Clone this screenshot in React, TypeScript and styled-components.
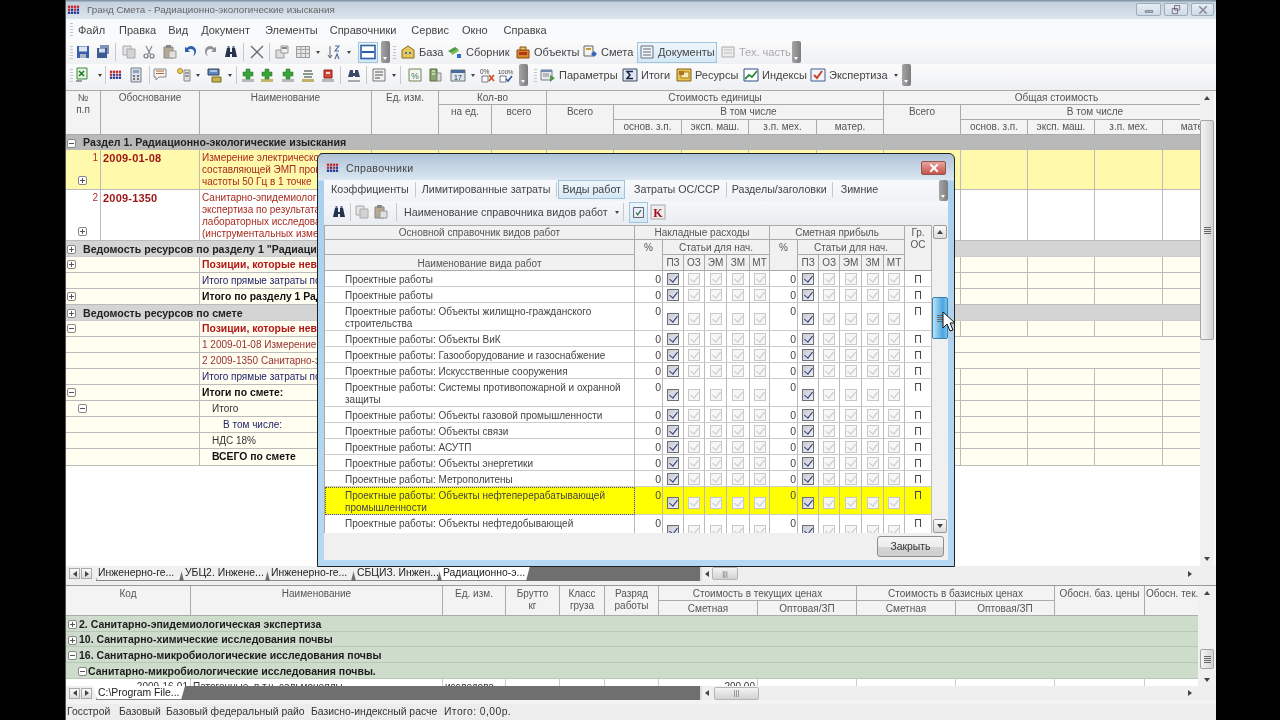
import React from "react";
import styled, { createGlobalStyle } from "styled-components";

const Global = createGlobalStyle`
  html, body { margin: 0; padding: 0; background: #000; }
  body { width: 1280px; height: 720px; overflow: hidden; font: 11px/12px "Liberation Sans", Arial, sans-serif; color: #333; }
  * { box-sizing: border-box; }
`;

const Page = styled.div`
  position: relative; width: 1280px; height: 720px; background: #000; padding-left: 65px; filter: blur(.35px);
`;
const Win = styled.div`
  width: 1151px; height: 720px; background: #f6f7f9; border-left: 1px solid #555; display: flex; flex-direction: column; overflow: hidden;
`;
const Title = styled.div`
  height: 19px; flex: none; display: flex; align-items: center; padding-left: 1px; color: #666; font-size: 9.8px;
  background: linear-gradient(#8497a8 0, #8497a8 1px, #c3d0dc 2px, #dbe5ee 100%);
`;
const TitleText = styled.span` flex: 1; margin-left: 6px; white-space: nowrap; `;
const Ctrl = styled.span`
  width: ${p => p.$w}px; height: 13px; margin-right: ${p => p.$mr ?? 3}px; border: 1px solid #9dadbb; border-radius: 2px; color: #556; display: flex; align-items: center; justify-content: center;
  background: linear-gradient(#e6edf3, #cfdae4);
`;
const Menu = styled.div`
  height: 21px; flex: none; display: flex; align-items: center; padding-left: 4px; background: #f9fafb; color: #444;
`;
const Grip = styled.span`
  width: 3px; height: 13px; flex: none; margin-left: ${p => p.$ml || 0}px; background: repeating-linear-gradient(#c0c4cc 0 1px, transparent 1px 3px);
`;
const MenuItem = styled.span` margin-left: ${p => p.$ml}px; white-space: nowrap; `;
const Bar = styled.div`
  height: ${p => p.$h}px; flex: none; display: flex; align-items: center; padding: 0 0 ${p => p.$pb || 0}px 4px; background: linear-gradient(#fbfbfc, #eef0f3); color: #555;
`;
const TB = styled.span`
  width: ${p => p.$w}px; height: 21px; flex: none; display: flex; align-items: center; justify-content: ${p => p.$text ? "flex-start" : "center"}; gap: ${p => p.$text ? 3 : 2}px; color: ${p => p.$dim ? "#aaa" : "#444"}; white-space: nowrap;
  margin-left: ${p => p.$ml || 0}px; padding-left: ${p => p.$text ? (p.$on ? 1 : 3) : 0}px; font-size: ${p => p.$fs || 11}px;
  ${p => p.$on ? "border: 1px solid #9fc4de; background: linear-gradient(#eef6fc,#d5e8f6);" : ""}
`;
const Caret = styled.span`
  width: 0; height: 0; flex: none; margin-left: ${p => p.$ml ?? 3}px; border: 2.5px solid transparent; border-top: 3px solid #444; border-bottom: 0;
`;
const Sep = styled.span` width: 1px; height: 18px; flex: none; margin: 0 ${p => p.$m ?? 2}px; background: #c7c9cc; `;
const More = styled.span`
  width: 9px; height: 22px; flex: none; margin-left: ${p => p.$ml || 0}px; border-radius: 2px; background: linear-gradient(90deg,#a5a5a5,#7d7d7d); position: relative;
  &::after { content: ""; position: absolute; left: 2px; bottom: 3px; border: 2.5px solid transparent; border-top: 3px solid #fff; border-bottom: 0; }
`;

const Main = styled.div` height: 476px; flex: none; display: flex; border-top: 1px solid #aaa; `;
const GridWrap = styled.div` width: 1134px; flex: none; overflow: hidden; background: #fff; `;
const Table = styled.table`
  border-collapse: separate; border-spacing: 0; table-layout: fixed; width: ${p => p.$w}px;
`;
const Head = styled.th`
  font-weight: 400; font-size: 10px; line-height: 12px; color: #555; background: #f3f3f3; vertical-align: top; text-align: center; padding: 1px 1px 0;
  border-right: 1px solid #aaa; border-bottom: 1px solid #aaa; overflow: hidden; white-space: ${p => p.$wrap ? "normal" : "nowrap"};
`;
const LHead = styled(Head)` padding-top: 2px; `;
const Tr = styled.tr` height: ${p => p.$h}px; `;
const Section = styled.td`
  background: ${p => p.$dark ? "#b9b9b9" : "#d4d4d4"}; font-weight: 700; font-size: 10.6px; color: #222; padding: 0 0 0 1px; white-space: nowrap; overflow: hidden; border-bottom: 1px solid ${p => p.$dark ? "#b9b9b9" : "#ccc"};
`;
const Cell = styled.td`
  background: ${p => p.$bg}; border-right: 1px solid #bbb; border-bottom: 1px solid #bbb; padding: 0 2px; overflow: hidden; vertical-align: middle; color: #333; font-size: 10px;
`;
const Num = styled(Cell)` position: relative; text-align: right; vertical-align: top; color: #b03030; padding-top: 2px; `;
const Code = styled(Cell)` font-weight: 700; font-size: 11px; color: #9d1414; vertical-align: top; letter-spacing: .2px; white-space: nowrap; padding-top: 2px; `;
const Name = styled(Cell)`
  color: ${p => p.$c || "#333"}; font-weight: ${p => p.$b ? 700 : 400}; font-size: ${p => p.$b ? 10.4 : 10}px; padding-left: ${p => p.$i || 2}px; vertical-align: ${p => p.$top ? "top" : "middle"}; padding-top: ${p => p.$top ? 2 : 0}px; white-space: nowrap;
`;
const Exp = styled.span`
  display: inline-block; vertical-align: middle; position: relative; width: 9px; height: 9px; border: 1px solid #888; border-radius: 2px; background: #fff; margin-right: ${p => p.$mr || 0}px; margin-left: ${p => p.$ml || 0}px; flex: none;
  &::before { content: ""; position: absolute; left: 1px; right: 1px; top: 3px; height: 1px; background: #555; }
  &::after { content: ""; display: ${p => p.$open ? "none" : "block"}; position: absolute; top: 1px; bottom: 1px; left: 3px; width: 1px; background: #555; }
`;
const ExpCell = styled(Cell)` vertical-align: middle; padding: 0 0 0 1px; `;
const RowExp = styled(Exp)` position: absolute; left: 12px; bottom: 4px; `;

const VScroll = styled.div`
  width: ${p => p.$w || 14}px; flex: none; display: flex; flex-direction: column; background: #f0f0f0; position: relative; align-items: center; padding: 0 ${p => p.$px || 0}px;
`;
const Arrow = styled.span`
  width: 0; height: 0; margin: ${p => p.$m || "5px 0"}; border: 3px solid transparent; flex: none;
  ${p => p.$dir === "up" ? "border-bottom: 4px solid #444; border-top: 0;" : ""}
  ${p => p.$dir === "down" ? "border-top: 4px solid #444; border-bottom: 0;" : ""}
  ${p => p.$dir === "left" ? "border-right: 4px solid #444; border-left: 0;" : ""}
  ${p => p.$dir === "right" ? "border-left: 4px solid #444; border-right: 0;" : ""}
`;
const Thumb = styled.span`
  width: 100%; height: ${p => p.$h}px; flex: none; margin-top: ${p => p.$mt}px; border: 1px solid #a5a5a5; border-radius: 2px; display: flex; align-items: center; justify-content: center;
  background: linear-gradient(90deg,#f4f4f4,#d4d4d4);
`;
const Lines = styled.span`
  width: 7px; height: 7px; background: repeating-linear-gradient(#666 0 1px, transparent 1px 2px); 
`;
const Spacer = styled.span` flex: 1; `;
const TabStrip = styled.div` height: ${p => p.$h}px; flex: none; display: flex; align-items: stretch; background: #6f6f6f; `;
const TabNav = styled.span` width: 30px; flex: none; background: #eee; display: flex; align-items: center; padding-left: 3px; gap: 1px; `;
const NavBtn = styled.span` width: 11px; height: 11px; border: 1px solid #aaa; background: linear-gradient(#fafafa,#ddd); display: flex; align-items: center; justify-content: center; `;
const Tab = styled.span`
  width: ${p => p.$w}px; flex: none; margin-left: -3px; padding-left: 5px; line-height: 13px; color: #222; white-space: nowrap; overflow: hidden; font-size: 10.4px;
  background: ${p => p.$on ? "#fff" : "#f0f0f0"}; border-bottom: 1px solid #888;
  clip-path: polygon(0 0, 100% 0, calc(100% - 4px) 100%, 4px 100%);
`;
const DarkFill = styled.span` flex: 1; background: #6f6f6f; `;
const HScroll = styled.span`
  width: ${p => p.$w}px; flex: none; background: #efefef; display: flex; align-items: center; padding-left: 3px; border-left: 2px solid #ddd;
`;
const HThumb = styled.span`
  width: ${p => p.$w}px; height: 13px; margin-left: ${p => p.$ml}px; border: 1px solid #b5b5b5; border-radius: 2px; background: linear-gradient(#f4f4f4,#d2d2d2); display: flex; align-items: center; justify-content: center; font-size: 7px; color: #666; letter-spacing: 0;
`;
const Splitter = styled.div` height: 5px; flex: none; background: #efefef; border-bottom: 1px solid #999; `;
const Lower = styled.div` height: 100px; flex: none; display: flex; `;
const LowerWrap = styled.div` width: 1132px; flex: none; overflow: hidden; background: #fff; `;
const GreenRow = styled.td`
  background: #cddccb; border-bottom: 1px solid #b8c8b6; font-weight: 700; font-size: 10.5px; color: #1c1c1c; white-space: nowrap; padding-left: ${p => p.$i || 2}px;
`;
const PlainCell = styled.td`
  border-right: 1px solid #ccc; overflow: hidden; white-space: nowrap; vertical-align: top; font-size: 10px; text-align: ${p => p.$r ? "right" : "left"}; color: #333; padding: 2px 2px 0; height: 16px;
`;
const Gap = styled.div` height: 4px; flex: none; background: #f3f3f3; `;
const Status = styled.div` height: 16px; flex: none; display: flex; align-items: center; background: #ededed; color: #333; font-size: 10.4px; letter-spacing: .05px; white-space: nowrap; overflow: hidden; `;
const StatusItem = styled.span` width: ${p => p.$w}px; flex: none; overflow: hidden; padding-left: 1px; letter-spacing: ${p => p.$ls || 0}px; `;

/* dialog */
const Dialog = styled.div`
  position: absolute; left: 317px; top: 153px; width: 638px; height: 414px; border: 1px solid #222; border-radius: 6px 6px 0 0; overflow: hidden;
  padding: 0 6px 6px; display: flex; flex-direction: column;
  background: linear-gradient(#afc3d6 0, #dbe7f2 26px, #a9d0ee 27px, #b5d9f3 100%);
`;
const DTitle = styled.div` height: 26px; flex: none; display: flex; align-items: center; color: #444; font-size: 10.6px; letter-spacing: .3px; padding: 2px 0 0 2px; `;
const DClose = styled.span`
  width: 25px; height: 14px; margin-right: 2px; border-radius: 2px; border: 1px solid #93524e; background: linear-gradient(#e8a49c,#c4544a); display: flex; align-items: center; justify-content: center; color: #fff;
`;
const DTabs = styled.div` height: 21px; flex: none; display: flex; align-items: flex-start; background: linear-gradient(#f8f9fb,#eff2f6); padding-left: 2px; color: #444; font-size: 10.7px; position: relative; `;
const DTab = styled.span`
  padding: 0 ${p => p.$pr ?? p.$pad ?? 5}px 0 ${p => p.$pad ?? 5}px; height: 19px; line-height: 17px; white-space: nowrap; margin-left: ${p => p.$ml || 0}px; border: 1px solid ${p => p.$on ? "#9fc4de" : "transparent"}; ${p => p.$on ? "background: linear-gradient(#eef6fc,#d5e8f6);" : ""}
`;
const DSep = styled.span` width: 1px; height: 15px; margin-top: 2px; background: #c5c8cc; flex: none; `;
const DMore = styled(More)` position: absolute; right: 0; top: 0; height: 21px; `;
const DBar = styled.div` height: 24px; flex: none; display: flex; align-items: center; padding: 0 0 2px 7px; background: linear-gradient(#f6f7fa,#e9ecf1); color: #444; `;
const DBody = styled.div` height: 308px; flex: none; display: flex; background: #f0f0f0; `;
const DGrid = styled.div` width: 608px; flex: none; overflow: hidden; background: #fff; border-top: 1px solid #aaa; border-left: 1px solid #aaa; `;
const DHead = styled(Head)` background: #f1f1f1; padding-top: ${p => p.$pt ?? 2}px; `;
const DCell = styled.td`
  background: ${p => p.$y ? "#ffff00" : "#fff"}; border-right: 1px solid #bbb; border-bottom: 1px solid #ccc; text-align: center; vertical-align: middle; padding: ${p => p.$tall ? "4px 0 0" : 0};
`;
const DName = styled.td`
  background: ${p => p.$y ? "#ffff00" : "#fff"}; border-right: 1px solid #bbb; border-bottom: 1px solid #ccc; padding: 3px 10px 0 20px; vertical-align: top; color: #444; font-size: 10px; line-height: 12px;
  ${p => p.$y ? "outline: 1px dotted #555; outline-offset: -1px;" : ""}
`;
const DVal = styled.td`
  background: ${p => p.$y ? "#ffff00" : "#fff"}; border-right: 1px solid #bbb; border-bottom: 1px solid #ccc; text-align: ${p => p.$c ? "center" : "right"}; vertical-align: top; padding: 2px 1px 0; color: #444; font-size: 10.5px;
`;
const Check = styled.span`
  display: inline-block; vertical-align: middle; width: 12px; height: 12px; border: 1px solid ${p => p.$on ? "#6f7074" : "#c6c8cc"}; background: ${p => p.$on ? "linear-gradient(135deg,#c8cad2,#eceef2)" : "#f6f6f6"}; position: relative;
  &::after { content: ""; position: absolute; left: 3px; top: 0; width: 4px; height: 7px; border: solid ${p => p.$on ? "#2c3c7c" : "#c4c8cc"}; border-width: 0 1.5px 1.5px 0; transform: rotate(38deg); }
`;
const DFoot = styled.div` flex: 1; display: flex; justify-content: flex-end; align-items: center; padding-right: 4px; background: #f0f0f0; `;
const DBtn = styled.span` width: 67px; height: 21px; border: 1px solid #8d8d8d; border-radius: 3px; background: linear-gradient(#f5f5f5 0, #ececec 50%, #d4d4d4 52%, #cfcfcf 100%); display: flex; align-items: center; justify-content: center; color: #333; font-size: 10.4px; `;
const DThumb = styled(Thumb)` border-color: #3c7fb1; background: linear-gradient(90deg,#b9e1f7,#4aa5de 70%,#7cc3eb); `;
const DScrollBtn = styled.span` width: 14px; height: 14px; flex: none; border: 1px solid #999; border-radius: 2px; background: linear-gradient(#fafafa,#dcdcdc); display: flex; align-items: center; justify-content: center; `;
const Pointer = styled.svg` position: absolute; left: 942px; top: 311px; `;

/* icons */
const S: React.FC<{ children: React.ReactNode; s?: number }> = ({ children, s = 16 }) => (
  <svg width={s} height={s} viewBox="0 0 16 16" style={{ flex: "none" }}>{children}</svg>
);
const Logo = () => (
  <S s={14}>
    {[0, 1, 2, 3].map(c => [0, 1, 2].map(r => (
      <rect key={c + "-" + r} x={1 + c * 3.4} y={3 + r * 3.4} width="2.6" height="2.6" fill={r === 0 ? "#c6262b" : r === 1 ? (c % 2 ? "#273a9c" : "#c6262b") : "#1f2f92"} />
    )))}
  </S>
);
const icons: Record<string, React.ReactNode> = {
  save: <><path d="M2 2h12v12H2z" fill="#3a5fa8" /><path d="M4 2.5h8v5H4z" fill="#dfe6f2" /><path d="M5 10h6v4H5z" fill="#aab6cc" /></>,
  saveall: <><path d="M5 1h9v9H5z" fill="#7f93b8" /><path d="M2 4h10v10H2z" fill="#3e5a92" /><path d="M4 4.5h6v4H4z" fill="#d5deeb" /></>,
  copy: <><path d="M2 2h8v9H2z" fill="#e3e3e3" stroke="#aaa" /><path d="M6 5h8v9H6z" fill="#d3d3d3" stroke="#aaa" /></>,
  cut: <><path d="M5 2l4 8M11 2L7 10" stroke="#888" strokeWidth="1.2" /><circle cx="5" cy="12" r="2" fill="none" stroke="#777" strokeWidth="1.2" /><circle cx="11" cy="12" r="2" fill="none" stroke="#777" strokeWidth="1.2" /></>,
  paste: <><path d="M2 3h9v11H2z" fill="#b6a98f" stroke="#888" /><path d="M4 1h5v3H4z" fill="#888" /><path d="M7 7h7v7H7z" fill="#e0e0e0" stroke="#999" /></>,
  undo: <path d="M3 3v5h5L6 6c2-2 5-1 6 1 .6 2 0 4-1 5 3-1 4-5 2-8-2-2-5-3-8 0z" fill="#2f5fae" />,
  redo: <path d="M13 3v5H8l2-2c-2-2-5-1-6 1-.6 2 0 4 1 5-3-1-4-5-2-8 2-2 5-3 8 0z" fill="#8f9399" />,
  bino: <><path d="M2 13l2-9h3v4h2V4h3l2 9H9v-3H7v3z" fill="#24324f" /><path d="M4.5 2h2v2h-2zM9.5 2h2v2h-2z" fill="#5a6b8a" /></>,
  cross: <path d="M2 2l12 12M14 2L2 14" stroke="#6a6a6a" strokeWidth="1.3" />,
  props: <><path d="M2 6h8v8H2z" fill="#ddd" stroke="#999" /><path d="M7 2h7v7H7z" fill="#f0f0f0" stroke="#999" /><path d="M8 3h5v2H8z" fill="#888" /></>,
  table: <><path d="M1.5 2.5h13v11h-13z" fill="#e6e6e6" stroke="#999" /><path d="M1.5 5.5h13M1.5 9.5h13M6 2.5v11M10.5 2.5v11" stroke="#a5a5a5" /></>,
  sort: <><path d="M4 2v12M2 11l2 3 2-3" stroke="#666" fill="none" /><path d="M9 2h4L9 7h4M9 15l2-5 2 5" stroke="#4a6a9a" fill="none" strokeWidth="1.1" /></>,
  layout: <><rect x="1" y="1.5" width="14" height="13" fill="#fff" stroke="#2e5fa6" strokeWidth="1.6" /><path d="M2 7h12v2H2z" fill="#2e5fa6" /></>,
  base: <><path d="M2 6l6-4 6 4v8H2z" fill="#e8c75b" stroke="#8a6a22" /><path d="M5 8h2v2H5zM9 8h2v2H9z" fill="#3a72b8" /></>,
  sborn: <><path d="M1 7l7-4 3 2-7 4z" fill="#4c9c42" /><path d="M4 9l7-4 1 2-7 4z" fill="#7ab953" /><path d="M10 10h4v4h-4z" fill="#2d6bc4" /></>,
  obj: <><path d="M2 6h12v8H2z" fill="#d8862c" stroke="#8a4a12" /><path d="M5 3h6v3H5z" fill="#f2c46a" stroke="#8a4a12" /><path d="M4 8h8v3H4z" fill="#b5341f" /></>,
  smeta: <><path d="M2 2h9v10H2z" fill="#f2f2f2" stroke="#666" /><path d="M4 4h5v2H4z" fill="#c99a2e" /><path d="M9 10l3-3 3 3-3 3z" fill="#2f68bb" /></>,
  docs: <><path d="M2 2h12v12H2z" fill="#f5f5f5" stroke="#607087" /><path d="M4 5h8M4 8h8M4 11h8" stroke="#5a6a80" /></>,
  tech: <><path d="M2 3h12v10H2z" fill="#eee" stroke="#aaa" /><path d="M4 6h8M4 9h8" stroke="#bbb" /></>,
  excel: <><path d="M3 1h10v11H3z" fill="#e6f1e2" stroke="#3f8a3c" /><path d="M5 4l5 5M10 4L5 9" stroke="#207a28" strokeWidth="1.6" /><path d="M2 14h6" stroke="#444" /></>,
  calc: <><path d="M3 1h10v14H3z" fill="#d8dce4" stroke="#78808c" /><path d="M5 3h6v3H5z" fill="#8ea2c2" /><path d="M5 8h2v2H5zM9 8h2v2H9zM5 11h2v2H5zM9 11h2v2H9z" fill="#777" /></>,
  note: <><path d="M1 2h12v8H6l-3 3v-3H1z" fill="#f4f4f4" stroke="#888" /><path d="M3 4h8M3 6.5h8" stroke="#b2602c" /></>,
  keyy: <><circle cx="5" cy="4" r="2.5" fill="#f0cc50" stroke="#a5872a" /><path d="M9 3h6v11H9z" fill="#dfdfdf" stroke="#888" /><path d="M10 6h4M10 9h4" stroke="#555" /></>,
  multi: <><path d="M1 2h11v6H1z" fill="#5d86c2" stroke="#345" /><path d="M3 4h7" stroke="#fff" /><path d="M5 10h9v5H5z" fill="#c9b34f" stroke="#75661f" /></>,
  plus: <><path d="M2 12h12v3H2z" fill="#b8b8b8" /><path d="M6 2h4v3h3v4h-3v3H6V9H3V5h3z" fill="#39a33a" stroke="#1b6f1f" strokeWidth=".5" /></>,
  plus2: <><path d="M2 12h12v3H2z" fill="#c8b46a" /><path d="M6 2h4v3h3v4h-3v3H6V9H3V5h3z" fill="#39a33a" stroke="#1b6f1f" strokeWidth=".5" /></>,
  lines: <><path d="M2 12h12v3H2z" fill="#c0b06a" /><path d="M4 4h8M3 7h10M4 10h8" stroke="#6a7a6a" strokeWidth="1.3" /></>,
  red: <><path d="M2 12h12v3H2z" fill="#b8b8b8" /><path d="M4 3h8v8H4z" fill="#d4473d" stroke="#8a201a" /><path d="M6 6h4" stroke="#fff" strokeWidth="1.5" /></>,
  find: <><path d="M2 13h12v2H2z" fill="#aaa" /><path d="M2 10l2-7h3v3h2V3h3l2 7H9V9H7v1z" fill="#3a4a66" /></>,
  list: <><path d="M2 2h12v12H2z" fill="#f0f0f0" stroke="#777" /><path d="M4 5h8M4 8h8M4 11h5" stroke="#555" /></>,
  pct: <><path d="M2 2h12v12H2z" fill="#f4f4f4" stroke="#6d8a55" /><text x="8" y="11.5" fontSize="8.5" fontFamily="Liberation Sans" textAnchor="middle" fill="#375">%</text></>,
  green: <><path d="M3 2h7v12H3z" fill="#8aa86a" stroke="#556b3a" /><path d="M5 4h3M5 7h3" stroke="#fff" /><path d="M10 6h4v8h-4z" fill="#ddd" stroke="#888" /></>,
  cal: <><path d="M1 3h14v11H1z" fill="#dfe5ee" stroke="#677" /><path d="M1 3h14v3H1z" fill="#4a6d9c" /><text x="8" y="13" fontSize="7" fontFamily="Liberation Sans" textAnchor="middle" fill="#234">17</text></>,
  pctx: <><text x="1" y="7" fontSize="6.5" fontFamily="Liberation Sans" fill="#444">0%</text><path d="M3 9h6v6H3z" fill="#fff" stroke="#778" /><path d="M10 8l5 6M15 8l-5 6" stroke="#d04a20" strokeWidth="1.6" /></>,
  pctok: <><text x="1" y="7" fontSize="6" fontFamily="Liberation Sans" fill="#444">100%</text><path d="M3 9h6v6H3z" fill="#fff" stroke="#778" /><path d="M9 12l2 2 4-5" stroke="#3158a8" strokeWidth="1.6" fill="none" /></>,
  params: <><path d="M1 3h11v10H1z" fill="#e8e8e8" stroke="#6f7f8f" /><path d="M1 3h11v2H1z" fill="#708bb0" /><path d="M3 7h6M3 9h6" stroke="#888" /><path d="M10 8l5 3-5 4z" fill="#4f9a4a" /></>,
  sigma: <><path d="M1 2h14v12H1z" fill="#dfe4ee" stroke="#3c4a66" /><path d="M11 4.5H5l3 3.5-3 3.5h6" stroke="#11224a" strokeWidth="1.5" fill="none" /></>,
  res: <><path d="M1 2h14v12H1z" fill="#e9c24e" stroke="#84661c" /><path d="M5 5h8v6H5z" fill="#f7ebb4" stroke="#a37a1c" /><path d="M3 4h5v4H3z" fill="#a8752a" /></>,
  idx: <><path d="M1 2h14v12H1z" fill="#fff" stroke="#2c4a8a" /><path d="M2 12l4-4 3 2 5-6" stroke="#2d8a38" strokeWidth="1.8" fill="none" /></>,
  exp: <><path d="M1 2h14v12H1z" fill="#f2f4f8" stroke="#3f5f95" /><path d="M4 8l3 3 5-7" stroke="#d23d28" strokeWidth="2" fill="none" /></>,
};
const Ic = ({ n }: { n: string }) => <S>{icons[n]}</S>;

type Item = { i?: string; w?: number; ml?: number; drop?: boolean; label?: string; sep?: boolean; m?: number; on?: boolean; dim?: boolean; cm?: number };
const tb1: Item[] = [
  { i: "save", w: 20 }, { i: "saveall", w: 20 }, { sep: true }, { i: "copy", w: 20, ml: 1 }, { i: "cut", w: 19 }, { i: "paste", w: 21, ml: 1 }, { i: "undo", w: 20 }, { i: "redo", w: 20, ml: 1 }, { i: "bino", w: 20 }, { sep: true },
  { i: "cross", w: 20, ml: 1 }, { sep: true }, { i: "props", w: 19 }, { i: "table", w: 29, drop: true, ml: 2 }, { i: "sort", w: 29, drop: true, ml: 2 },
  { i: "layout", w: 20, on: true, ml: 5 },
];
const tb1b: Item[] = [
  { i: "base", label: "База", w: 47 }, { i: "sborn", label: "Сборник", w: 68 }, { i: "obj", label: "Объекты", w: 67 }, { i: "smeta", label: "Смета", w: 58 },
  { i: "docs", label: "Документы", w: 80, on: true }, { i: "tech", label: "Тех. часть", w: 75, dim: true },
];
const tb2: Item[] = [
  { i: "excel", w: 30, drop: true, cm: 6 }, { sep: true }, { i: "logo", w: 16 }, { i: "calc", w: 22, ml: 1 }, { sep: true }, { i: "note", w: 18 }, { i: "keyy", w: 31, drop: true, ml: 2 }, { i: "multi", w: 30, drop: true, ml: 1 }, { sep: true },
  { i: "plus", w: 18 }, { i: "plus2", w: 20 }, { i: "plus", w: 21 }, { i: "lines", w: 20 }, { i: "red", w: 20 }, { sep: true }, { i: "find", w: 22 }, { sep: true, m: 1 }, { i: "list", w: 30, drop: true }, { sep: true }, { i: "pct", w: 20, ml: 2 }, { i: "green", w: 20 }, { i: "cal", w: 30, drop: true, ml: 2 }, { i: "pctx", w: 19 }, { i: "pctok", w: 18 },
];
const tb2b: Item[] = [
  { i: "params", label: "Параметры", w: 82 }, { i: "sigma", label: "Итоги", w: 54 }, { i: "res", label: "Ресурсы", w: 67 }, { i: "idx", label: "Индексы", w: 67 }, { i: "exp", label: "Экспертиза", w: 95, drop: true },
];
const renderItem = (it: Item, k: number) => {
  if (it.sep) return <Sep key={k} $m={it.m} />;
  return (
    <TB key={k} $w={it.w} $ml={it.ml} $on={it.on} $dim={it.dim} $text={!!it.label}>
      {it.i === "logo" ? <Logo /> : <Ic n={it.i!} />}
      {it.label && <span>{it.label}</span>}
      {it.drop && <Caret $ml={it.cm} />}
    </TB>
  );
};

const mainCols = [35, 99, 172, 67, 53, 55, 67, 68, 67, 68, 67, 77, 67, 67, 68, 67];
const MAINW = mainCols.reduce((a, b) => a + b, 0);
const Y = "#fff9ab", C = "#fffef0", W = "#fff";
const Empties = ({ bg, n = 13 }: { bg: string; n?: number }) => <>{Array.from({ length: n }, (_, i) => <Cell key={i} $bg={bg} />)}</>;

type R = { h: number; name: string; exp?: "+" | "-"; ind?: boolean; c?: string; b?: boolean; i?: number; wide?: boolean };
const creamA: R[] = [
  { h: 16, name: "Позиции, которые невозможно отнести", exp: "+", c: "#b31818", b: true },
  { h: 16, name: "Итого прямые затраты по разделу", c: "#22226e" },
  { h: 16, name: "Итого по разделу 1 Радиационно-экологические", exp: "+", c: "#111", b: true },
];
const creamB: R[] = [
  { h: 16, name: "Позиции, которые невозможно отнести", exp: "-", c: "#b31818", b: true },
  { h: 16, name: "1 2009-01-08 Измерение электрической составляющей ЭМП промышленной частоты 50 Гц в 1 точке, проектно-изыскательские работ", c: "#983030", wide: true },
  { h: 16, name: "2 2009-1350 Санитарно-эпидемиологическая экспертиза по результатам лабораторных исследований, проектно-изыскательских работ", c: "#983030", wide: true },
  { h: 16, name: "Итого прямые затраты по смете", c: "#22226e" },
  { h: 16, name: "Итоги по смете:", exp: "-", c: "#111", b: true },
  { h: 16, name: "Итого", exp: "-", ind: true, i: 12 },
  { h: 16, name: "В том числе:", c: "#22226e", i: 23 },
  { h: 16, name: "НДС 18%", i: 12 },
  { h: 17, name: "ВСЕГО по смете", c: "#111", b: true, i: 12 },
];
const CreamRow = ({ r }: { r: R }) => (
  <Tr $h={r.h}>
    <ExpCell colSpan={2} $bg={C}>{r.exp && <Exp $open={r.exp === "-"} $ml={r.ind ? 11 : 0} />}</ExpCell>
    {r.wide
      ? <Name colSpan={14} $bg={C} $c={r.c} $b={r.b} $i={r.i}>{r.name}</Name>
      : <><Name $bg={C} $c={r.c} $b={r.b} $i={r.i}>{r.name}</Name><Empties bg={C} /></>}
  </Tr>
);

const dCols = [310, 28, 21, 21, 22, 23, 20, 28, 21, 21, 22, 22, 21, 27];
const dRows: { n: string; h: number; tall?: boolean; y?: boolean }[] = [
  { n: "Проектные работы", h: 16 }, { n: "Проектные работы", h: 16 },
  { n: "Проектные работы: Объекты жилищно-гражданского строительства", h: 28, tall: true },
  { n: "Проектные работы: Объекты ВиК", h: 16 }, { n: "Проектные работы: Газооборудование и газоснабжение", h: 16 }, { n: "Проектные работы: Искусственные сооружения", h: 16 },
  { n: "Проектные работы: Системы противопожарной и охранной защиты", h: 28, tall: true },
  { n: "Проектные работы: Объекты газовой промышленности", h: 16 }, { n: "Проектные работы: Объекты связи", h: 16 }, { n: "Проектные работы: АСУТП", h: 16 }, { n: "Проектные работы: Объекты энергетики", h: 16 }, { n: "Проектные работы: Метрополитены", h: 16 },
  { n: "Проектные работы: Объекты нефтеперерабатывающей промышленности", h: 28, tall: true, y: true },
  { n: "Проектные работы: Объекты нефтедобывающей промышленности", h: 28, tall: true },
];
const lowerCols = [125, 252, 63, 54, 45, 54, 99, 99, 99, 99, 90, 70];
const Checks = ({ y, tall }: { y?: boolean; tall?: boolean }) => (
  <>{[0, 1, 2, 3, 4].map(i => <DCell key={i} $y={y} $tall={tall}><Check $on={i === 0} /></DCell>)}</>
);

export default function App() {
  return (
    <Page>
      <Global />
      <Win>
        <Title>
          <Logo />
          <TitleText>Гранд Смета - Радиационно-экологические изыскания</TitleText>
          <Ctrl $w={25}><S s={12}><path d="M3 9h10v2H3z" fill="none" stroke="#556" /></S></Ctrl>
          <Ctrl $w={24}><S s={12}><path d="M6 2h7v6H6zM3 6h7v7H3z" fill="#dde" stroke="#556" /></S></Ctrl>
          <Ctrl $w={23} $mr={2}><S s={12}><path d="M3 3l10 10M13 3L3 13" stroke="#889" strokeWidth="2" /></S></Ctrl>
        </Title>
        <Menu>
          <Grip />
          {[["Файл", 5], ["Правка", 14], ["Вид", 12], ["Документ", 13], ["Элементы", 15], ["Справочники", 12], ["Сервис", 15], ["Окно", 13], ["Справка", 16]].map(([t, m]) => (
            <MenuItem key={t as string} $ml={m as number}>{t}</MenuItem>
          ))}
        </Menu>
        <Bar $h={24}>
          <Grip />
          {tb1.map(renderItem)}
          <More $ml={3} />
          <Grip $ml={3} />
          <TB $w={1} />
          {tb1b.map(renderItem)}
          <More />
        </Bar>
        <Bar $h={26} $pb={4}>
          <Grip />
          {tb2.map(renderItem)}
          <More $ml={5} />
          <Grip $ml={6} />
          {tb2b.map(renderItem)}
          <More />
        </Bar>
        <Main>
          <GridWrap>
            <Table $w={MAINW}>
              <colgroup>{mainCols.map((w, i) => <col key={i} width={w} />)}</colgroup>
              <thead>
                <Tr $h={14}>
                  <Head rowSpan={3} $wrap>№<br />п.п</Head>
                  <Head rowSpan={3}>Обоснование</Head>
                  <Head rowSpan={3}>Наименование</Head>
                  <Head rowSpan={3}>Ед. изм.</Head>
                  <Head colSpan={2}>Кол-во</Head>
                  <Head colSpan={5}>Стоимость единицы</Head>
                  <Head colSpan={5}>Общая стоимость</Head>
                </Tr>
                <Tr $h={15}>
                  <Head rowSpan={2}>на ед.</Head>
                  <Head rowSpan={2}>всего</Head>
                  <Head rowSpan={2}>Всего</Head>
                  <Head colSpan={4}>В том числе</Head>
                  <Head rowSpan={2}>Всего</Head>
                  <Head colSpan={4}>В том числе</Head>
                </Tr>
                <Tr $h={15}>
                  {["основ. з.п.", "эксп. маш.", "з.п. мех.", "матер.", "основ. з.п.", "эксп. маш.", "з.п. мех.", "матер."].map((t, i) => <Head key={i}>{t}</Head>)}
                </Tr>
              </thead>
              <tbody>
                <Tr $h={15}><Section colSpan={16} $dark><Exp $open $mr={7} />Раздел 1. Радиационно-экологические изыскания</Section></Tr>
                <Tr $h={40}>
                  <Num $bg={Y}>1<RowExp /></Num><Code $bg={Y}>2009-01-08</Code>
                  <Name $bg={Y} $c="#a82a1e" $top>Измерение электрической<br />составляющей ЭМП промышленной<br />частоты 50 Гц в 1 точке</Name>
                  <Empties bg={Y} />
                </Tr>
                <Tr $h={51}>
                  <Num $bg={W}>2<RowExp /></Num><Code $bg={W}>2009-1350</Code>
                  <Name $bg={W} $c="#a82a1e" $top>Санитарно-эпидемиологическая<br />экспертиза по результатам<br />лабораторных исследований<br />(инструментальных измерений)</Name>
                  <Empties bg={W} />
                </Tr>
                <Tr $h={16}><Section colSpan={16}><Exp $mr={7} />Ведомость ресурсов по разделу 1 "Радиационно-экологические изыскания"</Section></Tr>
                {creamA.map((r, i) => <CreamRow key={i} r={r} />)}
                <Tr $h={16}><Section colSpan={16}><Exp $mr={7} />Ведомость ресурсов по смете</Section></Tr>
                {creamB.map((r, i) => <CreamRow key={i} r={r} />)}
              </tbody>
            </Table>
          </GridWrap>
          <VScroll>
            <Arrow $dir="up" />
            <Thumb $h={220} $mt={15}><Lines /></Thumb>
            <Spacer />
            <Arrow $dir="down" />
          </VScroll>
        </Main>
        <TabStrip $h={15}>
          <TabNav>
            <NavBtn><Arrow $dir="left" $m="0" /></NavBtn>
            <NavBtn><Arrow $dir="right" $m="0" /></NavBtn>
          </TabNav>
          <Tab $w={90}>Инженерно-ге...</Tab>
          <Tab $w={89}>УБЦ2. Инжене...</Tab>
          <Tab $w={89}>Инженерно-ге...</Tab>
          <Tab $w={89}>СБЦИЗ. Инжен...</Tab>
          <Tab $w={92} $on>Радиационно-э...</Tab>
          <DarkFill />
          <HScroll $w={516}><Arrow $dir="left" $m="0" /><HThumb $w={26} $ml={3}>|||</HThumb><Spacer /><Arrow $dir="right" $m="0 24px 0 0" /></HScroll>
        </TabStrip>
        <Splitter />
        <Lower>
          <LowerWrap>
            <Table $w={lowerCols.reduce((a, b) => a + b, 0)}>
              <colgroup>{lowerCols.map((w, i) => <col key={i} width={w} />)}</colgroup>
              <thead>
                <Tr $h={15}>
                  <LHead rowSpan={2}>Код</LHead>
                  <LHead rowSpan={2}>Наименование</LHead>
                  <LHead rowSpan={2}>Ед. изм.</LHead>
                  <LHead rowSpan={2} $wrap>Брутто<br />кг</LHead>
                  <LHead rowSpan={2} $wrap>Класс<br />груза</LHead>
                  <LHead rowSpan={2} $wrap>Разряд<br />работы</LHead>
                  <LHead colSpan={2}>Стоимость в текущих ценах</LHead>
                  <LHead colSpan={2}>Стоимость в базисных ценах</LHead>
                  <LHead rowSpan={2}>Обосн. баз. цены</LHead>
                  <LHead rowSpan={2}>Обосн. тек. цены</LHead>
                </Tr>
                <Tr $h={15}>
                  <LHead>Сметная</LHead><LHead>Оптовая/ЗП</LHead><LHead>Сметная</LHead><LHead>Оптовая/ЗП</LHead>
                </Tr>
              </thead>
              <tbody>
                <Tr $h={16}><GreenRow colSpan={12}><Exp $mr={2} />2. Санитарно-эпидемиологическая экспертиза</GreenRow></Tr>
                <Tr $h={15}><GreenRow colSpan={12}><Exp $mr={2} />10. Санитарно-химические исследования почвы</GreenRow></Tr>
                <Tr $h={16}><GreenRow colSpan={12}><Exp $open $mr={2} />16. Санитарно-микробиологические исследования почвы</GreenRow></Tr>
                <Tr $h={16}><GreenRow colSpan={12} $i={12}><Exp $open $mr={1} />Санитарно-микробиологические исследования почвы.</GreenRow></Tr>
                <Tr $h={16}>
                  <PlainCell $r>2009-16-01</PlainCell><PlainCell>Патогенные, в т.ч. сальмонеллы</PlainCell><PlainCell>исследова</PlainCell>
                  <PlainCell /><PlainCell /><PlainCell />
                  <PlainCell $r>200,00</PlainCell><PlainCell /><PlainCell /><PlainCell /><PlainCell /><PlainCell />
                </Tr>
              </tbody>
            </Table>
          </LowerWrap>
          <VScroll $w={18} $px={2}>
            <Arrow $dir="up" />
            <Spacer />
            <Thumb $h={20} $mt={0}><Lines /></Thumb>
            <Arrow $dir="down" $m="9px 0 4px" />
          </VScroll>
        </Lower>
        <TabStrip $h={14}>
          <TabNav>
            <NavBtn><Arrow $dir="left" $m="0" /></NavBtn>
            <NavBtn><Arrow $dir="right" $m="0" /></NavBtn>
          </TabNav>
          <Tab $w={92} $on>C:\Program File...</Tab>
          <DarkFill />
          <HScroll $w={516}><Arrow $dir="left" $m="0" /><HThumb $w={45} $ml={5}>|||</HThumb><Spacer /><Arrow $dir="right" $m="0 24px 0 0" /></HScroll>
        </TabStrip>
        <Gap />
        <Status>
          <StatusItem $w={52}>Госстрой</StatusItem>
          <StatusItem $w={47}>Базовый</StatusItem>
          <StatusItem $w={145}>Базовый федеральный райо</StatusItem>
          <StatusItem $w={133}>Базисно-индексный расче</StatusItem>
          <StatusItem $w={100} $ls={.4}>Итого: 0,00р.</StatusItem>
        </Status>
      </Win>

      <Dialog>
        <DTitle><Logo /><TitleText>Справочники</TitleText>
          <DClose><S s={12}><path d="M3 3l10 10M13 3L3 13" stroke="#fff" strokeWidth="2.4" /></S></DClose>
        </DTitle>
        <DTabs>
          <DTab $pad={4} $pr={5}>Коэффициенты</DTab><DSep />
          <DTab>Лимитированные затраты</DTab><DSep />
          <DTab $on $pad={3} $ml={1}>Виды работ</DTab>
          <DTab $ml={3}>Затраты ОС/ССР</DTab><DSep />
          <DTab $pad={4}>Разделы/заголовки</DTab><DSep />
          <DTab $pad={7}>Зимние</DTab>
          <DMore />
        </DTabs>
        <DBar>
          <Ic n="bino" /><Sep $m={3} />
          <TB $w={16}><Ic n="copy" /></TB><TB $w={22}><Ic n="paste" /></TB><Sep $m={4} />
          <TB $w={222} $text $fs={10.7}>Наименование справочника видов работ<Caret $ml={4} /></TB>
          <Sep $m={0} />
          <TB $w={19} $ml={5} $on><S s={13}><rect x="2" y="2" width="12" height="12" fill="#eef" stroke="#444" /><path d="M5 8l2 3 4-6" stroke="#2c7a3a" strokeWidth="1.6" fill="none" /></S></TB>
          <TB $w={16} $ml={2}><S><rect x="1" y="1" width="14" height="14" fill="#eee" stroke="#aaa" /><text x="8" y="12.5" fontSize="12" fontWeight="700" fontFamily="Liberation Serif" textAnchor="middle" fill="#a01020">K</text></S></TB>
        </DBar>
        <DBody>
          <DGrid>
            <Table $w={607}>
              <colgroup>{dCols.map((w, i) => <col key={i} width={w} />)}</colgroup>
              <thead>
                <Tr $h={14}>
                  <DHead $pt={1}>Основной справочник видов работ</DHead>
                  <DHead $pt={1} colSpan={6}>Накладные расходы</DHead>
                  <DHead $pt={1} colSpan={6}>Сметная прибыль</DHead>
                  <DHead $pt={1} rowSpan={3} $wrap>Гр.<br />ОС</DHead>
                </Tr>
                <Tr $h={15}>
                  <DHead rowSpan={1} />
                  <DHead rowSpan={2}>%</DHead>
                  <DHead colSpan={5}>Статьи для нач.</DHead>
                  <DHead rowSpan={2}>%</DHead>
                  <DHead colSpan={5}>Статьи для нач.</DHead>
                </Tr>
                <Tr $h={16}>
                  <DHead $pt={3}>Наименование вида работ</DHead>
                  {["ПЗ", "ОЗ", "ЭМ", "ЗМ", "МТ"].map(t => <DHead key={t}>{t}</DHead>)}
                  {["ПЗ", "ОЗ", "ЭМ", "ЗМ", "МТ"].map(t => <DHead key={t + "2"}>{t}</DHead>)}
                </Tr>
              </thead>
              <tbody>
                {dRows.map((r, i) => (
                  <Tr key={i} $h={r.h}>
                    <DName $y={r.y}>{r.n}</DName>
                    <DVal $y={r.y}>0</DVal>
                    <Checks y={r.y} tall={r.tall} />
                    <DVal $y={r.y}>0</DVal>
                    <Checks y={r.y} tall={r.tall} />
                    <DVal $y={r.y} $c>П</DVal>
                  </Tr>
                ))}
              </tbody>
            </Table>
          </DGrid>
          <VScroll $w={16}>
            <DScrollBtn><Arrow $dir="up" $m="0" /></DScrollBtn>
            <DThumb $h={42} $mt={58}><Lines /></DThumb>
            <Spacer />
            <DScrollBtn><Arrow $dir="down" $m="0" /></DScrollBtn>
          </VScroll>
        </DBody>
        <DFoot><DBtn>Закрыть</DBtn></DFoot>
      </Dialog>
      <Pointer width="13" height="22" viewBox="0 0 13 22"><path d="M1 1v16l4-4 3 7 3-1-3-7h5z" fill="#fff" stroke="#111" /></Pointer>
    </Page>
  );
}
